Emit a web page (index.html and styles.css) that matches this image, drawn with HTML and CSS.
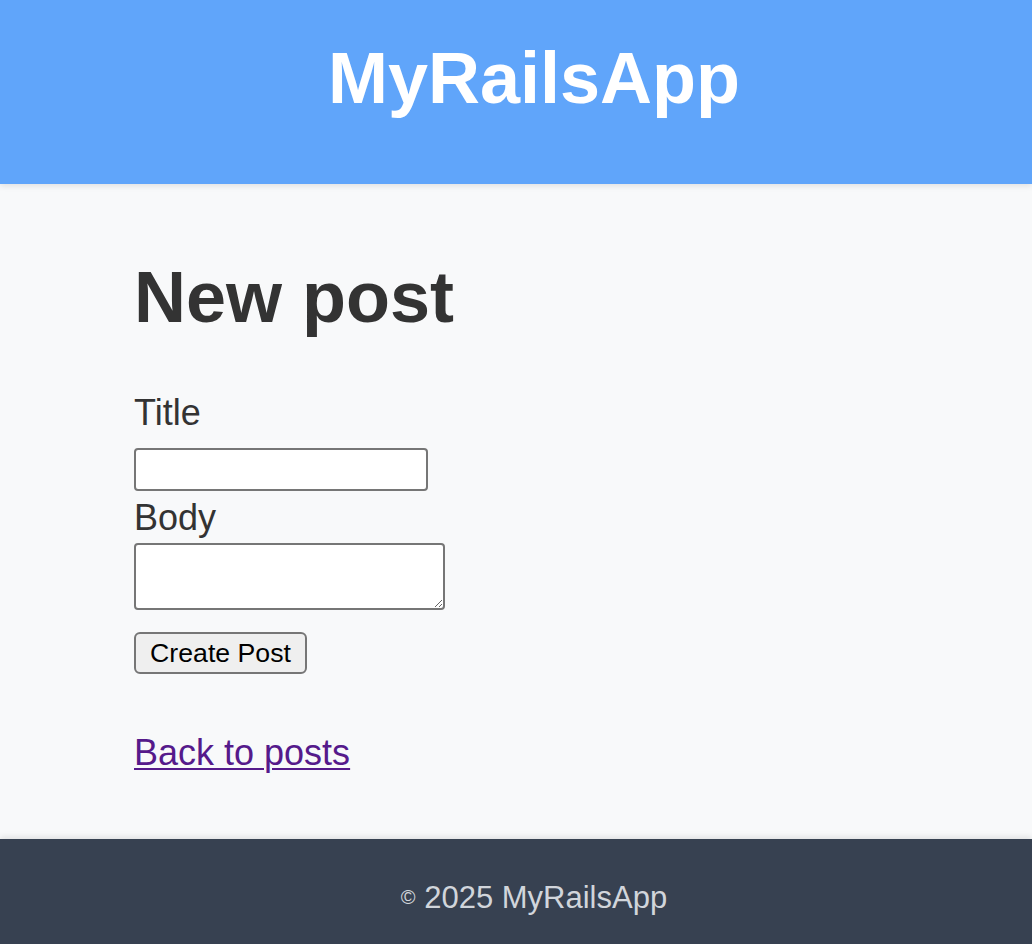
FILE: index.html
```html
<!DOCTYPE html>
<html>
<head>
  <title>MyRailsApp</title>
  <link rel="stylesheet" href="styles.css">
</head>
<body>
  <header class="site-header">
    <div class="brand">MyRailsApp</div>
  </header>

  <main class="main">
    <div class="container">
      <h1 class="page-title">New post</h1>

      <form class="post-form">
        <label for="post_title" class="form-label">Title</label>
        <input type="text" id="post_title" class="form-input">

        <label for="post_body" class="form-label form-label-body">Body</label>
        <textarea id="post_body" class="form-textarea"></textarea>

        <div class="form-actions">
          <button type="button" class="submit-btn">Create Post</button>
        </div>
      </form>

      <a href="#" class="back-link">Back to posts</a>
    </div>
  </main>

  <footer class="site-footer">
    <p class="footer-text"><span class="copy">&copy;</span> 2025 MyRailsApp</p>
  </footer>
</body>
</html>
```

FILE: styles.css
```css
:root {
  --header-bg: #60a5fa;
  --page-bg: #f8f9fa;
  --footer-bg: #374151;
  --footer-text: #d1d5db;
  --text-color: #333;
  --link-color: #551a8b;
  --field-border: #767676;
  --shadow: 0 2px 6px rgba(0, 0, 0, 0.1);
}

* {
  margin: 0;
  padding: 0;
  box-sizing: border-box;
}

body {
  font-family: 'Liberation Sans', Arial, sans-serif;
  color: var(--text-color);
  background-color: var(--page-bg);
}

.site-header {
  position: relative;
  z-index: 1;
  background-color: var(--header-bg);
  box-shadow: var(--shadow);
  padding: 30px 0 58px 36px;
  text-align: center;
}

.brand {
  font-size: 72px;
  font-weight: 700;
  line-height: 96px;
  color: #fff;
}

.main {
  padding: 72px 0 66px;
}

.container {
  max-width: 764px;
  margin: 0 auto;
}

.page-title {
  font-size: 72px;
  font-weight: 700;
  line-height: 83px;
  margin-bottom: 53px;
}

.post-form {
  display: flex;
  flex-direction: column;
  align-items: flex-start;
}

.form-label {
  display: block;
  font-size: 36px;
  line-height: 41px;
  margin-bottom: 15px;
}

.form-label-body {
  margin-top: 6px;
  margin-bottom: 5px;
}

.form-input,
.form-textarea {
  display: block;
  background-color: #fff;
  border: 2px solid var(--field-border);
  border-radius: 4px;
  font-family: 'Liberation Sans', Arial, sans-serif;
  font-size: 26px;
}

.form-input {
  width: 294px;
  height: 43px;
}

.form-textarea {
  width: 311px;
  height: 67px;
}

.form-actions {
  margin-top: 22px;
}

.submit-btn {
  display: block;
  width: 173px;
  height: 42px;
  background-color: #efefef;
  border: 2px solid var(--field-border);
  border-radius: 6px;
  font-family: 'Liberation Sans', Arial, sans-serif;
  font-size: 26.67px;
  color: #000;
  cursor: pointer;
}

.back-link {
  display: inline-block;
  margin-top: 58px;
  font-size: 36px;
  line-height: 41px;
  color: var(--link-color);
  text-decoration-thickness: 2px;
  text-underline-offset: 3px;
}

.site-footer {
  background-color: var(--footer-bg);
  box-shadow: 0 -2px 6px rgba(0, 0, 0, 0.1);
  padding: 34px 0 34px 36px;
  text-align: center;
}

.footer-text {
  font-size: 31px;
  line-height: 48px;
  color: var(--footer-text);
}

.copy {
  font-size: 20px;
  vertical-align: 4px;
}
```
